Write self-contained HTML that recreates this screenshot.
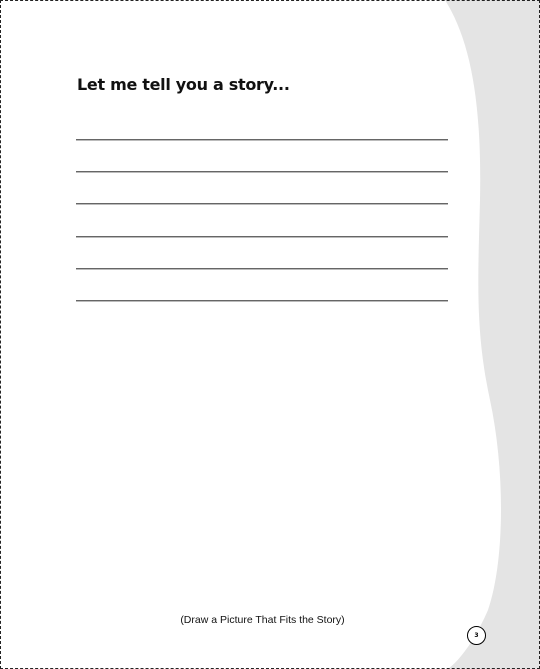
<!DOCTYPE html>
<html><head><style>
body{margin:0;width:540px;height:669px;position:relative;background:#fff;overflow:hidden;font-family:"DejaVu Sans","Liberation Sans",sans-serif}
.b{position:absolute;left:0;top:0;width:538px;height:667px;border:1px dashed #222}
h1{position:absolute;left:77px;top:75px;margin:0;font-size:16px;font-weight:bold;color:#111;letter-spacing:-0.3px}
.l{position:absolute;left:76px;width:372px;height:1px;background:#666;border-bottom:1px solid #bbb}
.c{position:absolute;left:0;width:525px;top:614px;text-align:center;font-size:10.5px;color:#111;font-family:"Liberation Sans",sans-serif}
.p{position:absolute;left:467px;top:626px;width:17px;height:17px;border:1.5px solid #000;border-radius:50%;background:#fff;font-size:6px;text-align:center;line-height:17px;font-weight:bold}
</style></head><body>
<svg style="position:absolute;left:0;top:0" width="540" height="669"><path d="M445 0 C470 40 482 100 480 200 C478 280 475 330 490 400 C505 470 505 560 488 610 C475 640 460 660 448 669 L540 669 L540 0 Z" fill="#e4e4e4"/></svg>
<div class="b"></div>
<h1>Let me tell you a story...</h1>
<div class="l" style="top:139px"></div>
<div class="l" style="top:171px"></div>
<div class="l" style="top:203px"></div>
<div class="l" style="top:236px"></div>
<div class="l" style="top:268px"></div>
<div class="l" style="top:300px"></div>
<div class="c">(Draw a Picture That Fits the Story)</div>
<div class="p">3</div>
</body></html>
